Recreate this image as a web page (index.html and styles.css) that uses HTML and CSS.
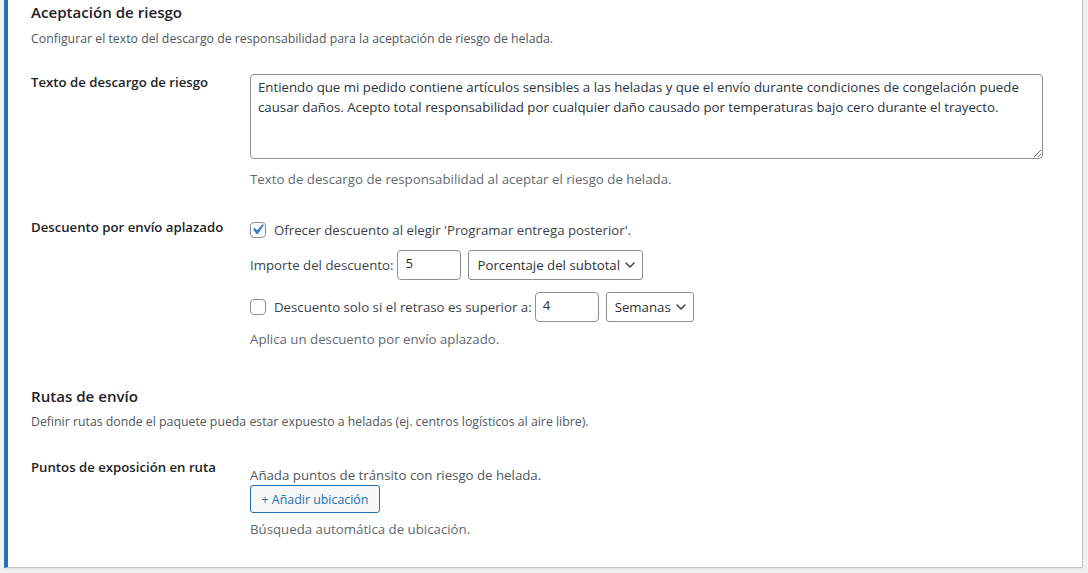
FILE: index.html
```html
<!DOCTYPE html>
<html lang="es">
<head>
<meta charset="utf-8">
<title>Aceptación de riesgo</title>
<link rel="stylesheet" href="styles.css">
</head>
<body>
<div class="wrap">
  <div class="card">
    <h2 class="section-title">Aceptación de riesgo</h2>
    <p class="section-desc">Configurar el texto del descargo de responsabilidad para la aceptación de riesgo de helada.</p>

    <div class="row row-first">
      <div class="label">Texto de descargo de riesgo</div>
      <div class="field">
        <textarea class="textarea">Entiendo que mi pedido contiene artículos sensibles a las heladas y que el envío durante condiciones de congelación puede causar daños. Acepto total responsabilidad por cualquier daño causado por temperaturas bajo cero durante el trayecto.</textarea>
        <p class="description desc-after-textarea">Texto de descargo de responsabilidad al aceptar el riesgo de helada.</p>
      </div>
    </div>

    <div class="row">
      <div class="label">Descuento por envío aplazado</div>
      <div class="field">
        <label class="check-line">
          <span class="cb">
            <input type="checkbox" class="cb-input" checked>
            <svg class="cb-mark" viewBox="0 0 20 20" width="21" height="21" aria-hidden="true"><path d="M14.83 4.89l1.34.94-5.81 8.38H9.02L5.78 9.67l1.34-1.25 2.57 2.4z" fill="#3582c4"/></svg>
          </span>
          <span>Ofrecer descuento al elegir 'Programar entrega posterior'.</span>
        </label>
        <div class="inline-line line-amount">
          <span>Importe del descuento:</span>
          <input type="text" class="num num-amount" value="5">
          <span class="select-wrap sel-type">
            <select class="select"><option>Porcentaje del subtotal</option></select>
            <svg class="chev" viewBox="0 0 10 6" width="10" height="6" aria-hidden="true"><path d="M1 1l4 4 4-4" fill="none" stroke="#3c434a" stroke-width="1.5" stroke-linecap="round" stroke-linejoin="round"/></svg>
          </span>
        </div>
        <div class="inline-line line-delay">
          <span class="cb"><input type="checkbox" class="cb-input"></span>
          <span class="delay-text">Descuento solo si el retraso es superior a:</span>
          <input type="text" class="num num-delay" value="4">
          <span class="select-wrap sel-unit">
            <select class="select"><option>Semanas</option></select>
            <svg class="chev" viewBox="0 0 10 6" width="10" height="6" aria-hidden="true"><path d="M1 1l4 4 4-4" fill="none" stroke="#3c434a" stroke-width="1.5" stroke-linecap="round" stroke-linejoin="round"/></svg>
          </span>
        </div>
        <p class="description desc-discount">Aplica un descuento por envío aplazado.</p>
      </div>
    </div>

    <h2 class="section-title section-title-2">Rutas de envío</h2>
    <p class="section-desc section-desc-2">Definir rutas donde el paquete pueda estar expuesto a heladas (ej. centros logísticos al aire libre).</p>

    <div class="row row-routes">
      <div class="label">Puntos de exposición en ruta</div>
      <div class="field">
        <p class="field-text">Añada puntos de tránsito con riesgo de helada.</p>
        <button type="button" class="button">+ Añadir ubicación</button>
        <p class="description desc-routes">Búsqueda automática de ubicación.</p>
      </div>
    </div>
  </div>
</div>
</body>
</html>
```

FILE: styles.css
```css
html, body {
  margin: 0;
  padding: 0;
  background: #f0f0f1;
}

body {
  font-family: "Open Sans", "Noto Sans", "Liberation Sans", sans-serif;
  font-size: 12.3px;
  color: #3c434a;
}

.wrap {
  padding: 0 5px 5px 4px;
}

.card {
  background: #fff;
  border: 1px solid #c3c4c7;
  border-top: 0;
  border-left: 4px solid #2271b1;
  padding: 1px 39px 13px 23px;
  box-shadow: 0 1px 1px rgba(0, 0, 0, 0.04);
}

.section-title {
  margin: 0;
  font-size: 15.1px;
  line-height: 22px;
  font-weight: 600;
  color: #1d2327;
}

.section-title-2 {
  margin-top: 21px;
}

.section-desc {
  margin: 6px 0 0;
  line-height: 20px;
  color: #50575e;
}

.section-desc-2 {
  margin-top: 5px;
}

.row {
  display: flex;
}

.row-first {
  margin-top: 10px;
}

.row-routes {
  margin-top: 12px;
}

.label {
  width: 219px;
  flex: none;
  padding-top: 14px;
  line-height: 18px;
  font-size: 13.2px;
  font-weight: 600;
  color: #1d2327;
}

.field {
  flex: 1;
  min-width: 0;
  padding: 15px 0;
}

.textarea {
  display: block;
  box-sizing: border-box;
  width: 100%;
  height: 85px;
  margin: 0;
  padding: 2px 7px;
  border: 1px solid #8c8f94;
  border-radius: 4px;
  font-family: inherit;
  font-size: 13.25px;
  line-height: 20px;
  color: #2c3338;
  background: #fff;
  resize: vertical;
}

.description {
  margin: 0;
  line-height: 20px;
  font-size: 13.25px;
  color: #646970;
}

.desc-after-textarea {
  margin-top: 10px;
}

.desc-discount {
  margin-top: 7px;
}

.check-line {
  display: flex;
  align-items: center;
  gap: 8px;
  height: 22px;
  font-size: 13.25px;
  color: #3c434a;
}

.cb {
  position: relative;
  display: inline-flex;
  width: 16px;
  height: 16px;
  flex: none;
}

.cb-input {
  appearance: none;
  -webkit-appearance: none;
  box-sizing: border-box;
  width: 16px;
  height: 16px;
  margin: 0;
  border: 1px solid #8c8f94;
  border-radius: 4px;
  background: #fff;
}

.cb-mark {
  position: absolute;
  left: -3px;
  top: -3px;
  pointer-events: none;
}

.inline-line {
  display: flex;
  align-items: center;
  height: 30px;
  font-size: 13.25px;
  color: #3c434a;
}

.line-amount {
  margin-top: 9px;
}

.line-delay {
  margin-top: 12px;
}

.line-amount .num {
  margin-left: 4px;
}

.delay-text {
  margin-left: 8px;
}

.line-delay .num {
  margin-left: 3px;
}

.num {
  box-sizing: border-box;
  width: 64px;
  height: 30px;
  margin: 0;
  padding: 0 0 4px 7px;
  border: 1px solid #8c8f94;
  border-radius: 4px;
  font-family: inherit;
  font-size: 13.25px;
  color: #2c3338;
  background: #fff;
}

.select-wrap {
  position: relative;
  display: inline-flex;
  margin-left: 7px;
}

.select {
  appearance: none;
  -webkit-appearance: none;
  box-sizing: border-box;
  height: 30px;
  margin: 0;
  padding: 0 14px 0 8px;
  border: 1px solid #8c8f94;
  border-radius: 3px;
  font-family: inherit;
  font-size: 13.25px;
  color: #2c3338;
  background: #fff;
}

.sel-type .select {
  width: 175px;
}

.sel-unit .select {
  width: 88px;
}

.chev {
  position: absolute;
  right: 8px;
  top: 12px;
  pointer-events: none;
}

.field-text {
  margin: 6px 0 0;
  line-height: 20px;
  font-size: 13.25px;
  color: #50575e;
}

.button {
  display: block;
  box-sizing: border-box;
  width: 130px;
  height: 28px;
  margin: 0;
  padding: 0 10px;
  border: 1px solid #2271b1;
  border-radius: 3px;
  background: #f6f7f7;
  color: #2271b1;
  font-family: inherit;
  font-size: 12.4px;
  cursor: pointer;
}

.desc-routes {
  margin-top: 6px;
}
```
